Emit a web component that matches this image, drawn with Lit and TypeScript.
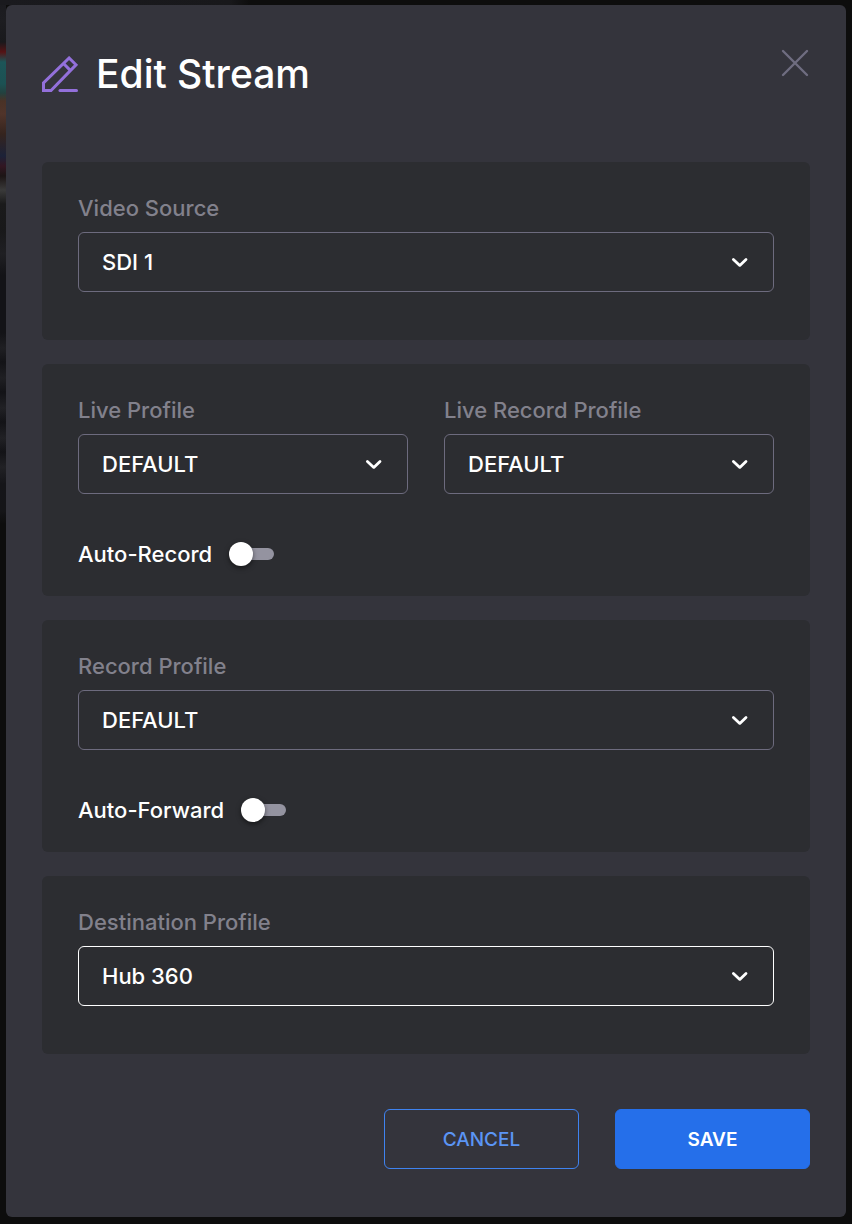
import { LitElement, html, css } from "lit";
import { customElement, property } from "lit/decorators.js";

@customElement("select-field")
class SelectField extends LitElement {
  @property() label = "";
  @property({ attribute: false }) options: string[] = [];
  @property({ type: Boolean }) active = false;

  static styles = css`
    :host {
      display: block;
      min-width: 0;
    }
    .label {
      display: block;
      margin-bottom: 10px;
      font-size: 22px;
      line-height: 28px;
      color: #82818c;
    }
    .control {
      display: grid;
      align-items: center;
    }
    .select {
      grid-area: 1 / 1;
      appearance: none;
      box-sizing: border-box;
      width: 100%;
      height: 60px;
      margin: 0;
      padding: 0 60px 0 23px;
      border: 1px solid #6d6b7e;
      border-radius: 6px;
      outline: none;
      background: transparent;
      color: #fff;
      font: inherit;
      font-size: 22px;
    }
    .select.active,
    .select:focus {
      border-color: #fff;
    }
    .option {
      background: #2c2d31;
    }
    .chevron {
      grid-area: 1 / 1;
      justify-self: end;
      width: 20px;
      height: 20px;
      margin-right: 24px;
      pointer-events: none;
    }
  `;

  render() {
    return html`
      <label class="label" for="field">${this.label}</label>
      <div class="control">
        <select id="field" class="select ${this.active ? "active" : ""}">
          ${this.options.map((o) => html`<option class="option">${o}</option>`)}
        </select>
        <svg class="chevron" viewBox="0 0 20 20" fill="none" stroke="#fff" stroke-width="2.8"
          stroke-linecap="round" stroke-linejoin="round" aria-hidden="true">
          <path d="M3.4 7.4 9.8 13.4l6.2-6" />
        </svg>
      </div>
    `;
  }
}

@customElement("toggle-field")
class ToggleField extends LitElement {
  @property() label = "";

  static styles = css`
    :host {
      display: block;
    }
    .row {
      display: inline-flex;
      align-items: center;
      gap: 17px;
      font-size: 22px;
      line-height: 28px;
      color: #fff;
    }
    .switch {
      appearance: none;
      display: grid;
      align-items: center;
      width: 45px;
      height: 24px;
      margin: 0;
      cursor: pointer;
    }
    .switch::before,
    .switch::after {
      content: "";
      grid-area: 1 / 1;
    }
    .switch::before {
      height: 12px;
      margin-left: 4px;
      border-radius: 6px;
      background: #9493a0;
    }
    .switch::after {
      width: 24px;
      height: 24px;
      border-radius: 50%;
      background: #fff;
      box-shadow: 0 2px 5px rgba(0, 0, 0, 0.5);
    }
    .switch:checked::before {
      background: #256fea;
    }
    .switch:checked::after {
      justify-self: end;
    }
  `;

  render() {
    return html`
      <label class="row">${this.label}<input class="switch" type="checkbox" role="switch" /></label>
    `;
  }
}

@customElement("app-root")
class AppRoot extends LitElement {
  static styles = css`
    :host {
      display: block;
      box-sizing: border-box;
      min-height: 100vh;
      padding: 5px 6px 7px;
      font-family: Inter, "Liberation Sans", sans-serif;
      font-weight: 500;
      background:
        linear-gradient(90deg, #1a1a1e 0, #18181b 230px, #0d0d0d 250px) 0 0 / 100% 5px no-repeat,
        linear-gradient(
            180deg,
            #1b1b1f 0,
            #1d1d21 20px,
            #19191c 42px,
            #551315 52px,
            #1d5558 62px,
            #1c5153 84px,
            #23413f 93px,
            #4a3226 101px,
            #50342a 114px,
            #35241e 134px,
            #1c2238 156px,
            #321622 166px,
            #1c1515 176px,
            #3a3a3a 190px,
            #1a1a1b 204px,
            #18181a 230px,
            #1f1f23 254px,
            #131317 275px,
            #131317 333px,
            #1f1f23 348px,
            #131317 362px,
            #1f1f23 378px,
            #131317 392px,
            #212125 408px,
            #131317 422px,
            #212125 438px,
            #131317 452px,
            #212125 467px,
            #151519 484px,
            #151518 511px,
            #0d0d0d 524px
          )
          0 0 / 6px 100% no-repeat,
        #0d0d0d;
    }
    .dialog {
      box-sizing: border-box;
      min-height: calc(100vh - 12px);
      padding: 36px 36px 48px;
      border-radius: 6px;
      background: #34343c;
    }
    .header {
      display: flex;
      align-items: flex-start;
      justify-content: space-between;
      margin-bottom: 58px;
    }
    .heading {
      display: flex;
      align-items: center;
      gap: 18px;
      padding-top: 3px;
    }
    .pencil {
      width: 36px;
      height: 36px;
    }
    .title {
      margin: 0;
      font-size: 39px;
      line-height: 60px;
      font-weight: 500;
      color: #fff;
    }
    .close {
      display: flex;
      margin: 7px 0 0;
      padding: 0;
      border: 0;
      background: none;
      cursor: pointer;
    }
    .cross {
      width: 30px;
      height: 30px;
    }
    .panels {
      display: grid;
      gap: 24px;
    }
    .panel {
      padding: 32px 36px 48px;
      border-radius: 6px;
      background: #2c2d31;
    }
    .panel.toggled {
      padding-bottom: 28px;
    }
    .pair {
      display: grid;
      grid-template-columns: 1fr 1fr;
      gap: 36px;
    }
    .toggle {
      margin-top: 46px;
    }
    .actions {
      display: flex;
      justify-content: flex-end;
      gap: 36px;
      margin-top: 55px;
    }
    .button {
      box-sizing: border-box;
      width: 195px;
      height: 60px;
      border: 1px solid #3f83f0;
      border-radius: 6px;
      background: transparent;
      color: #5b95f5;
      font: inherit;
      font-size: 19px;
      cursor: pointer;
    }
    .button.primary {
      border-color: #256fea;
      background: #256fea;
      color: #fff;
      font-weight: 600;
    }
  `;

  render() {
    return html`
      <form class="dialog" role="dialog" aria-labelledby="title" @submit=${(e: Event) => e.preventDefault()}>
        <header class="header">
          <div class="heading">
            <svg class="pencil" viewBox="0 0 36 36" fill="none" stroke="#9370db" stroke-width="3"
              aria-hidden="true">
              <path d="M1.5 34.5v-7.6L27.1 2l6.9 6.8L9 34.5z M21.3 7.2l7.2 7.4" />
              <path d="M18 34.5h16.5" stroke-linecap="round" />
            </svg>
            <h1 class="title" id="title">Edit Stream</h1>
          </div>
          <button class="close" type="button" aria-label="Close">
            <svg class="cross" viewBox="0 0 30 30" fill="none" stroke="#6f6d80" stroke-width="2.4"
              stroke-linecap="round" aria-hidden="true">
              <path d="M3 3l24 24M27 3 3 27" />
            </svg>
          </button>
        </header>
        <div class="panels">
          <section class="panel">
            <select-field label="Video Source" .options=${["SDI 1"]}></select-field>
          </section>
          <section class="panel toggled">
            <div class="pair">
              <select-field label="Live Profile" .options=${["DEFAULT"]}></select-field>
              <select-field label="Live Record Profile" .options=${["DEFAULT"]}></select-field>
            </div>
            <toggle-field class="toggle" label="Auto-Record"></toggle-field>
          </section>
          <section class="panel toggled">
            <select-field label="Record Profile" .options=${["DEFAULT"]}></select-field>
            <toggle-field class="toggle" label="Auto-Forward"></toggle-field>
          </section>
          <section class="panel">
            <select-field label="Destination Profile" .options=${["Hub 360"]} active></select-field>
          </section>
        </div>
        <footer class="actions">
          <button class="button" type="button">CANCEL</button>
          <button class="button primary" type="submit">SAVE</button>
        </footer>
      </form>
    `;
  }
}
